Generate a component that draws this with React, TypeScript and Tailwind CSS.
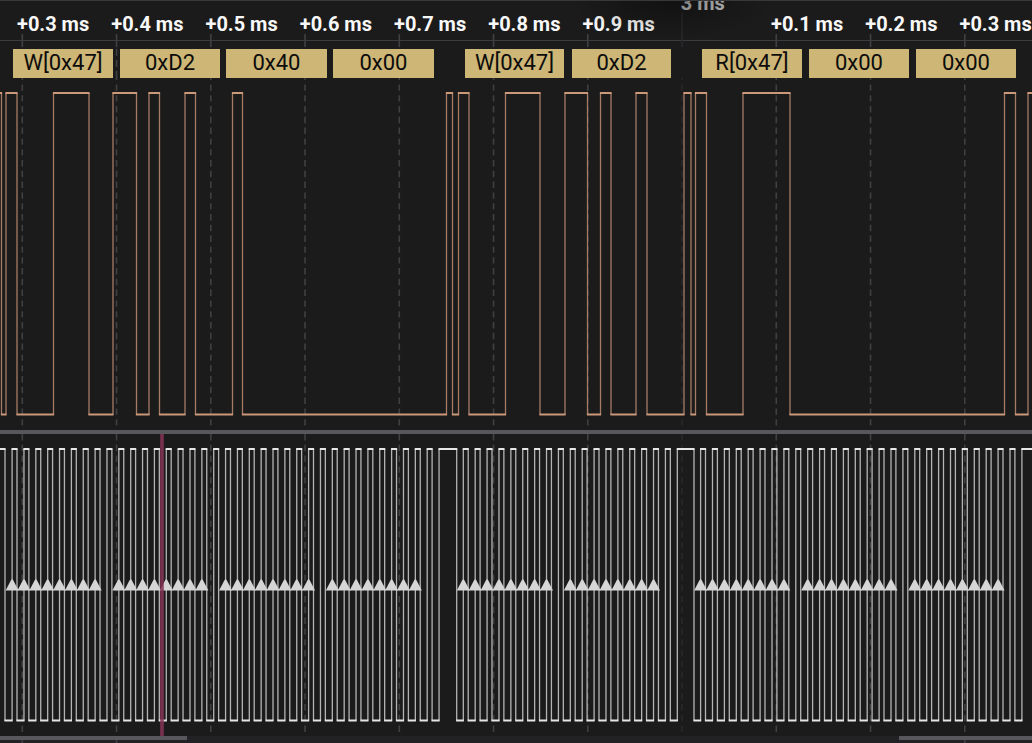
const WIDTH = 1032
const TICK_STEP = 94.25
const pct = (n: number) => `${(n / WIDTH) * 100}%`
const tickX = (i: number) => 22.3 + i * TICK_STEP

const ticks = ['+0.3 ms', '+0.4 ms', '+0.5 ms', '+0.6 ms', '+0.7 ms', '+0.8 ms', '+0.9 ms', '3 ms', '+0.1 ms', '+0.2 ms', '+0.3 ms']
const MAJOR = 7

// gap = empty space before the frame, both in timeline units
const frames = [
  { label: 'W[0x47]', gap: 13, width: 100 },
  { label: '0xD2', gap: 7, width: 100 },
  { label: '0x40', gap: 6, width: 101 },
  { label: '0x00', gap: 6, width: 101 },
  { label: 'W[0x47]', gap: 31, width: 99 },
  { label: '0xD2', gap: 8, width: 99 },
  { label: 'R[0x47]', gap: 31, width: 100 },
  { label: '0x00', gap: 7, width: 100 },
  { label: '0x00', gap: 7, width: 100 },
]

// SDA toggles at each of these positions, starting high
const dataEdges = [
  1.5, 6, 17, 53.5, 89, 113, 136.5, 149, 159.5, 185, 195.5, 232.5, 242.5, 446.5, 452.5, 458.5, 469,
  505.5, 540, 565, 587.5, 600.5, 611, 636, 647, 684, 691, 695.5, 706.5, 743, 790, 1004.5, 1015.5, 1028,
]

const bursts = [
  { start: 12.1, bytes: 4, period: 11.86 },
  { start: 463.3, bytes: 2, period: 11.89 },
  { start: 700.6, bytes: 3, period: 11.9 },
]

const clockEdges: number[] = [5]
const samples: number[] = []
bursts.forEach(({ start, bytes, period }, b) => {
  const pulses = bytes * 9
  for (let i = 0; i < pulses; i++) {
    const x = start + i * period
    clockEdges.push(x, x + 4.9)
    if (i % 9 !== 8) samples.push(x)
  }
  clockEdges.push(start + pulses * period)
  if (b < bursts.length - 1) clockEdges.push(bursts[b + 1].start - 6.6)
})

type TraceProps = { edges: number[]; high: number; low: number; edgeColor: string; levelColor: string }

// vertical edges are drawn dimmer than the flat levels
function Trace({ edges, high, low, edgeColor, levelColor }: TraceProps) {
  const edgePath = edges.map((x) => `M${x} ${high}V${low}`).join('')
  const stops = [-2, ...edges, WIDTH + 2]
  const levelPath = stops.slice(1).map((x, i) => `M${stops[i] - 0.6} ${i % 2 ? low : high}H${x + 0.6}`).join('')
  return (
    <g fill="none">
      <path d={edgePath} stroke={edgeColor} strokeWidth="1.3" />
      <path d={levelPath} stroke={levelColor} strokeWidth="1.8" />
    </g>
  )
}

function GridLines({ height, offset }: { height: number; offset: number }) {
  return (
    <g strokeWidth="1.6" strokeDasharray="6.4 4.4" strokeDashoffset={offset}>
      {ticks.map((_, i) => (
        <line key={i} x1={tickX(i)} x2={tickX(i)} y1="0" y2={height} stroke={i === MAJOR ? '#29292c' : '#404044'} />
      ))}
    </g>
  )
}

function Ruler() {
  return (
    <header className="relative h-10 border-t border-[#38383b]">
      <div className="flex h-full overflow-hidden">
        {ticks.map((label, i) => (
          <div key={i} className="shrink-0 whitespace-nowrap pl-[17px] text-[20px] leading-6 font-bold text-[#f8f8f8]" style={{ width: pct(TICK_STEP) }}>
            {i === MAJOR ? <span className="block -mt-[10px] pl-1 text-[#c4c4c4]">{label}</span> : <span className="block pt-[11px]">{label}</span>}
          </div>
        ))}
      </div>
      <div className="absolute top-0 left-[55%] w-1/5 h-full bg-[radial-gradient(ellipse_at_top,rgba(0,0,0,0.35),transparent_70%)]" />
    </header>
  )
}

function Frames() {
  return (
    <div className="border-t border-[#3b3b40] pt-2">
      <div className="relative z-10 flex">
        {frames.map((f, i) => (
          <div
            key={i}
            className="h-[29px] shrink-0 bg-[#cdb676] text-center text-[22px] leading-7 text-[#0c0c0c]"
            style={{ marginLeft: pct(f.gap), width: pct(f.width) }}
          >
            {f.label}
          </div>
        ))}
      </div>
    </div>
  )
}

function App() {
  return (
    <main className="relative min-h-screen overflow-hidden bg-[#1b1b1b] font-['Roboto',sans-serif]">
      <Ruler />
      <Frames />
      <svg className="block w-full h-auto overflow-visible" viewBox="0 0 1032 352" role="img" aria-label="SDA">
        {ticks.map((_, i) => (
          <path key={i} d={`M${tickX(i)} ${i === MAJOR ? -65 : -44}V-31`} stroke={i === MAJOR ? '#29292c' : '#404044'} strokeWidth="1.6" />
        ))}
        <path d={`M${tickX(1)} -29V-22M${tickX(1)} -18V-11M${tickX(1)} -7V0`} stroke="#404044" strokeWidth="1.6" />
        <GridLines height={352} offset={4.4} />
        <Trace edges={dataEdges} high={15} low={336.5} edgeColor="#a67c65" levelColor="#cb987a" />
      </svg>
      <div className="h-1 bg-[#58585c]" />
      <svg className="block w-full h-auto" viewBox="0 0 1032 302" role="img" aria-label="SCL">
        <GridLines height={298} offset={0} />
        <Trace edges={clockEdges} high={15} low={286.5} edgeColor="#b4b4b4" levelColor="#e6e6e6" />
        {samples.map((x) => (
          <path key={x} d={`M${x - 6.5} 156.500L${x - 1} 146Q${x} 144.500 ${x + 1} 146L${x + 6.5} 156.500Z`} fill="#d6d6d6" />
        ))}
        <rect x="160.2" y="0" width="3.6" height="302" fill="#843354" fillOpacity="0.88" />
      </svg>
      <footer className="bg-[#222225]">
        <div className="flex justify-between">
          <div className="h-1 bg-[#58585c]" style={{ width: pct(187) }} />
          <div className="h-1 bg-[#58585c]" style={{ width: pct(133) }} />
        </div>
        <svg className="block w-full h-auto" viewBox="0 0 1032 3" aria-hidden="true">
          <path d={`M${tickX(0)} 0V3M${tickX(1)} 0V3M${tickX(10)} 0V3`} stroke="#404044" strokeWidth="1.6" />
        </svg>
      </footer>
    </main>
  )
}

export default App
